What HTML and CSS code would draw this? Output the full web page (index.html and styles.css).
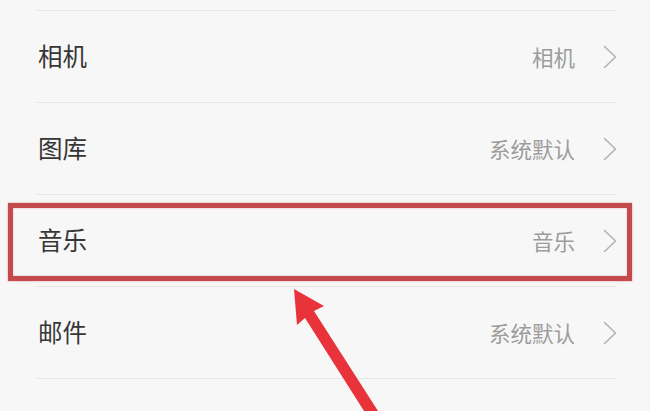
FILE: index.html
```html
<!DOCTYPE html>
<html lang="zh-CN">
<head>
<meta charset="utf-8">
<title>默认应用</title>
<link rel="stylesheet" href="styles.css">
</head>
<body>
<div class="page">
  <ul class="list">
    <li class="row">
      <span class="label">相机</span>
      <span class="value">相机</span>
      <svg class="chev" viewBox="0 0 14 24" width="14" height="24"><path d="M1.5 1.5 L12.5 12 L1.5 22.5"/></svg>
    </li>
    <li class="row">
      <span class="label">图库</span>
      <span class="value">系统默认</span>
      <svg class="chev" viewBox="0 0 14 24" width="14" height="24"><path d="M1.5 1.5 L12.5 12 L1.5 22.5"/></svg>
    </li>
    <li class="row row-marked">
      <span class="label">音乐</span>
      <span class="value">音乐</span>
      <svg class="chev" viewBox="0 0 14 24" width="14" height="24"><path d="M1.5 1.5 L12.5 12 L1.5 22.5"/></svg>
    </li>
    <li class="row">
      <span class="label">邮件</span>
      <span class="value">系统默认</span>
      <svg class="chev" viewBox="0 0 14 24" width="14" height="24"><path d="M1.5 1.5 L12.5 12 L1.5 22.5"/></svg>
    </li>
  </ul>
  <svg class="arrow" viewBox="0 0 650 411" width="650" height="411">
    <polygon points="294,289 324,306 314,311 378,411 364,411 305,318 297,325"/>
  </svg>
</div>
</body>
</html>
```

FILE: styles.css
```css
html, body {
  margin: 0;
  padding: 0;
  background: #f7f7f7;
}
.page {
  position: relative;
  width: 650px;
  height: 411px;
  overflow: hidden;
  background: #f7f7f7;
  font-family: "Noto Sans CJK SC", "Noto Sans", sans-serif;
}
.list {
  list-style: none;
  margin: 10px 34px 0 36px;
  padding: 0;
}
.row {
  position: relative;
  display: flex;
  align-items: center;
  height: 91px;
  border-top: 1px solid #e7e7e7;
  padding-left: 2px;
}
.row:last-child {
  border-bottom: 1px solid #e7e7e7;
}
.label {
  flex: 1;
  font-size: 24.5px;
  color: #363636;
  line-height: 1;
}
.value {
  font-size: 21.5px;
  color: #9c9c9c;
  line-height: 1;
}
.chev {
  margin-left: 28px;
  margin-right: -1px;
  fill: none;
  stroke: #b3b3b3;
  stroke-width: 1.6;
  stroke-linecap: round;
  stroke-linejoin: round;
}
.row-marked::after {
  content: "";
  position: absolute;
  top: 8px;
  bottom: 5px;
  left: -28px;
  right: -16px;
  border: 5px solid #c44a4e;
  box-shadow: 0 0 2px rgba(198, 71, 76, 0.5), inset 0 0 2px rgba(198, 71, 76, 0.4);
  pointer-events: none;
}
.arrow {
  position: absolute;
  top: 0;
  left: 0;
  pointer-events: none;
  fill: #e8333b;
  filter: blur(0.4px);
}
```
